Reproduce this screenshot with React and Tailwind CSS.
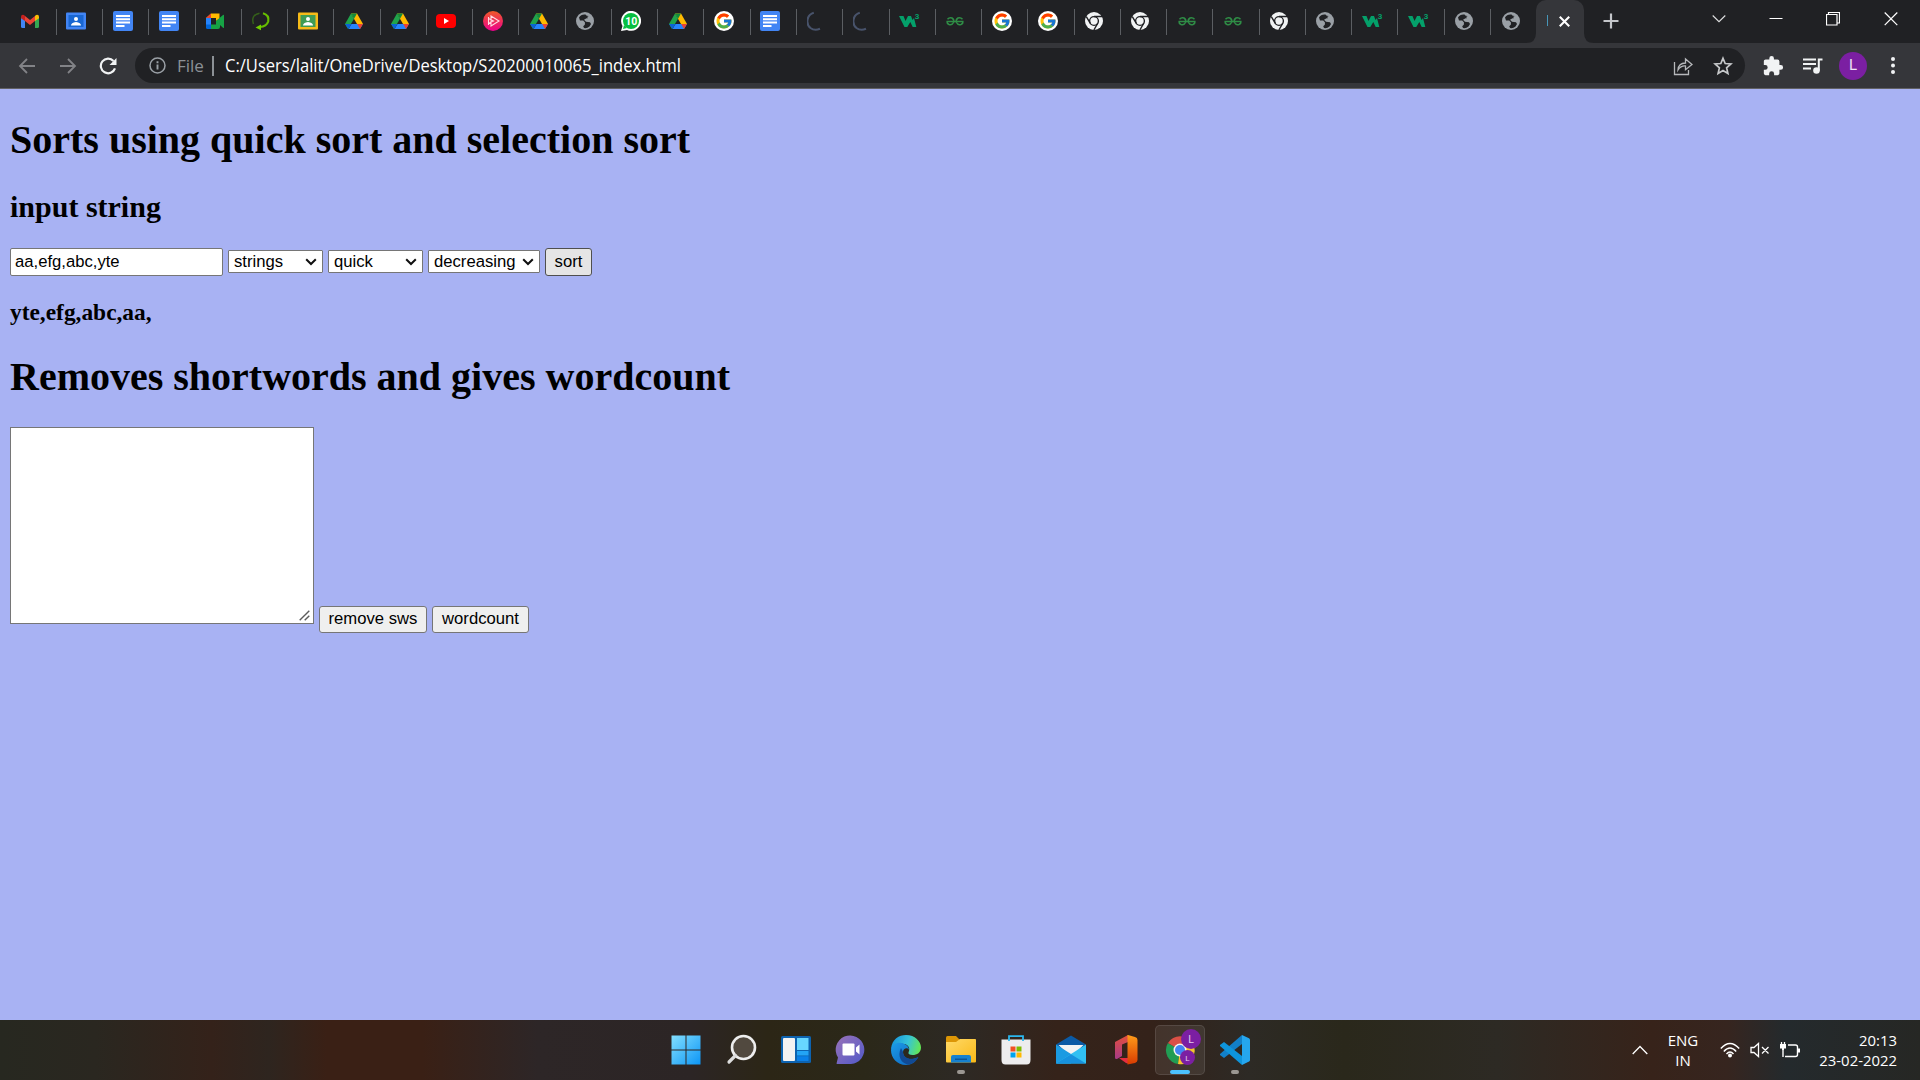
import React from "react";
import { FcGoogle } from "react-icons/fc";

const S = ({ vb = "0 0 20 20", className = "w-5 h-5", children }) => (
  <svg viewBox={vb} className={"shrink-0 " + className} fill="none">{children}</svg>
);

const Gmail = () => (
  <S><path d="M1 6v9.500q0 1.500 1.500 1.500H5V9z" fill="#4285f4" /><path d="M15 9v8h2.500q1.500 0 1.500-1.500V6z" fill="#34a853" /><path d="M5 5v5l5 4 5-4V5l-5 4z" fill="#ea4335" /><path d="M15 5l1-1q3-.8 3 2v1.200L15 10z" fill="#fbbc04" /><path d="M5 5L4 4Q1 3.200 1 6v1.200L5 10z" fill="#c5221f" /></S>
);
const Classroom = ({ bg, inner }) => (
  <S><rect x="0" y="1.500" width="20" height="17" rx="1" fill={bg} /><rect x="2.500" y="4" width="15" height="12" fill={inner} /><circle cx="10" cy="8" r="2" fill="#fff" /><path d="M5 14.500q0-3 5-3.500 5 .5 5 3.500z" fill="#fff" /></S>
);
const Docs = () => (
  <S><rect width="20" height="20" rx="2" fill="#4285f4" /><path d="M3 5h14M3 8.300h14M3 11.600h14M3 15h8.500" stroke="#fff" strokeWidth="2" /></S>
);
const Meet = () => (
  <S><path d="M1 7l5-4.500h8.500v5L11 10V7H6v1z" fill="#ffba00" /><path d="M1 7l5-4.500V7z" fill="#ea4335" /><path d="M1 7h5v7l-5 0z" fill="#2684fc" /><path d="M1 13.500h5V18H2.500Q1 18 1 16.500z" fill="#0066da" /><path d="M6 13.500h5V10l7-6q1-.5 1 .5v12q0 1-1 .3l-3-2.800V16q0 2-2 2H6z" fill="#16a345" /></S>
);
const Ring = () => (
  <S><path d="M12 2.200Q18.500 4 17.200 10.500 15.500 15.500 9 16" stroke="#66bd00" strokeWidth="2.200" /><path d="M10 13.500v5.800L4.500 16.500z" fill="#72cf00" /><path d="M2.500 13Q-.5 4 8.500 2.200" stroke="#35601a" strokeWidth="1.500" /></S>
);
const Drive = () => (
  <S><path d="M7 2.500h6l6 10.500h-6z" fill="#ffba00" /><path d="M7 2.500l3 5.200L4 18 1 13z" fill="#20a34b" /><path d="M7 2.500h6l-3 5.200z" fill="#118b3b" /><path d="M4.500 18l3-5H19l-3 5z" fill="#2684fc" /><path d="M1 13h6.500l-3.200 5z" fill="#0b63d6" /><path d="M13.200 13H19l-3 5z" fill="#ea4335" /></S>
);
const Youtube = () => (
  <S><rect x="0" y="3" width="20" height="14" rx="4" fill="#f00" /><path d="M8 7v6l5-3z" fill="#fff" /></S>
);
const Pluralsight = () => (
  <S><defs><linearGradient id="ps" x1="0" y1="0" x2="0" y2="1"><stop stopColor="#f05a28" /><stop offset="1" stopColor="#ec008c" /></linearGradient></defs><circle cx="10" cy="10" r="10" fill="url(#ps)" /><path d="M5.500 6v8M5.500 7.500l5 2.500-5 2.500M8 5l8 5-8 5z" stroke="#ffdce4" strokeWidth="1.100" /></S>
);
const Globe = () => (
  <S><circle cx="10" cy="10" r="9" fill="#9aa0a6" /><path d="M10.500 3.500q-4.500-.5-6.500 3l1 3h3.200l1.800 2-.2 2.200-1.600 1.500.8 1.800q3 .6 5.500-1.500l1.500-2.500-1-1.800-4-.4-2-2 2.500-1.600 1.600.2.800-2.400-2.200-.3z" fill="#202124" /><path d="M12.500 5.500l2.500-.8 1.800 3.300-1.800 1-2.500-1z" fill="#9aa0a6" /></S>
);
const Whatsapp = () => (
  <S><path d="M0 20l1.500-5A10 10 0 1 1 6 19z" fill="#fff" /><circle cx="10" cy="10" r="8" fill="#06bf40" /><path d="M2 18l1-4 3 3z" fill="#06bf40" /><text x="10.200" y="13.800" textAnchor="middle" fontSize="10.500" fontWeight="700" fontFamily="Roboto, sans-serif" fill="#fff">10</text></S>
);
const Google = () => (
  <span className="flex h-5 w-5 shrink-0 items-center justify-center rounded-full bg-white"><FcGoogle size={18} /></span>
);
const Arc = () => (
  <S><path d="M7.800 1.800A8.800 8.800 0 0 0 4.500 17Q8.500 20 14 17.800" stroke="#48536b" strokeWidth="2.100" transform="translate(-1 0)" /></S>
);
const W3 = () => (
  <S className="h-5 w-5 overflow-visible"><path d="M0 5h4.500l2 5L9 5h3l1.500 4L15 7l2.300 9h-3.600l-2.400-5-3 5H5.500z" fill="#04a06a" /><text x="15.800" y="8.300" fontSize="8" fontWeight="700" fontFamily="Roboto, sans-serif" fill="#04a06a">3</text></S>
);
const Gfg = () => (
  <S><path d="M1.500 10.500h17M2.500 8.300Q4.500 6 7 7q2.500 1.500 1.500 4.500Q7 14.500 4 13.500 1.800 12.500 2 10.500M17.500 8.300Q15.500 6 13 7q-2.500 1.500-1.500 4.500 1.500 3 4.500 2 2.200-1 2-3" stroke="#2f8d46" strokeWidth="1.500" /></S>
);
const Chrome = () => (
  <S><circle cx="10" cy="10" r="9" fill="#f1f3f4" /><circle cx="10" cy="10" r="4.400" fill="#f1f3f4" stroke="#202124" strokeWidth="1.400" /><path d="M10 5.500h8.300M6.200 12.200L2.300 5.600M13.800 12.200L9.900 19" stroke="#202124" strokeWidth="1.400" /></S>
);
const People = () => <Classroom bg="#4285f4" inner="#1967d2" />;
const Class = () => <Classroom bg="#f6bb18" inner="#3f9c55" />;

const tabs = [Gmail, People, Docs, Docs, Meet, Ring, Class, Drive, Drive, Youtube, Pluralsight, Drive, Globe, Whatsapp, Drive, Google, Docs, Arc, Arc, W3, Gfg, Google, Google, Chrome, Chrome, Gfg, Gfg, Chrome, Globe, W3, W3, Globe, Globe];

function TabStrip() {
  return (
    <div className="flex h-[43px] bg-[#202124] pl-[10.5px]">
      <div className="flex items-start">
        {tabs.map((Icon, i) => (
          <div key={i} className="flex h-[43px] w-[46.27px] items-start pt-[9px]">
            <div className={i < tabs.length - 1 ? "flex h-[26px] w-full items-start border-r border-[#5b5e62] pl-[9.5px] pt-[2px]" : "flex h-[26px] w-full items-start pl-[9.5px] pt-[2px]"}>
              <Icon />
            </div>
          </div>
        ))}
      </div>
      <div className="relative -ml-[1.4px] flex h-[43px] w-12 items-center rounded-t-[10px] bg-[#35363a] pl-[11px]">
        <svg className="absolute bottom-0 -left-[10px] h-[10px] w-[10px]" viewBox="0 0 10 10"><path d="M10 0v10H0Q10 10 10 0z" fill="#35363a" /></svg>
        <svg className="absolute bottom-0 -right-[10px] h-[10px] w-[10px]" viewBox="0 0 10 10"><path d="M0 0v10h10Q0 10 0 0z" fill="#35363a" /></svg>
        <div className="-mt-0.5 h-[11px] w-[1.5px] bg-[#4796b8]" />
        <S vb="0 0 10 10" className="ml-[10.5px] -mt-px h-[11px] w-[11px]"><path d="M.7.7l8.600 8.600M9.300.7L.7 9.300" stroke="#fff" strokeWidth="1.900" /></S>
      </div>
      <S vb="0 0 16 16" className="ml-[19px] mt-[13px] h-4 w-4"><path d="M8 .5v15M.5 8h15" stroke="#c4c6ca" strokeWidth="2.200" /></S>
      <div className="ml-auto flex items-start pr-[22px] pt-[12px]">
        <S vb="0 0 14 14" className="mr-[43px] h-[14px] w-[14px]"><path d="M.7 3.500L7 9.700l6.300-6.200" stroke="#dfe0e1" strokeWidth="1.100" /></S>
        <S vb="0 0 14 14" className="mr-[43px] h-[14px] w-[14px]"><path d="M.5 6.500h13" stroke="#fff" /></S>
        <S vb="0 0 14 14" className="mr-[44px] h-[14px] w-[14px]"><path d="M.5 2.500h10.500v10.500H.5zM2.500 2.500v-2h11v10.500h-2.500" stroke="#fff" strokeWidth="1.200" /></S>
        <S vb="0 0 14 14" className="h-[14px] w-[14px]"><path d="M.7.500l12.600 12.600M13.300.500L.7 13.100" stroke="#fff" strokeWidth="1.200" /></S>
      </div>
    </div>
  );
}

function Toolbar() {
  return (
    <div className="flex h-[46px] items-start border-b border-[#616165] bg-[#35363a] pl-[18px] pt-[5px]">
      <div className="flex h-[35px] items-center">
        <S vb="0 0 18 18" className="h-[18px] w-[18px]"><path d="M17 9H2.500M9 2L2 9l7 7" stroke="#828387" strokeWidth="1.800" /></S>
        <S vb="0 0 18 18" className="ml-[23px] h-[18px] w-[18px]"><path d="M1 9h14.500M9 2l7 7-7 7" stroke="#828387" strokeWidth="1.800" /></S>
        <S vb="0 0 18 18" className="ml-[22px] h-[18px] w-[18px]"><path d="M14.500 4A7.300 7.300 0 1 0 16 11.400" stroke="#f1f3f4" strokeWidth="2.200" /><path d="M17.500 1v7h-7z" fill="#f1f3f4" /></S>
      </div>
      <div className="ml-[18px] flex h-[35px] w-[1610px] items-center rounded-full bg-[#202124] pl-[14px] pr-[12px]">
        <S vb="0 0 17 17" className="h-[17px] w-[17px]"><circle cx="8.500" cy="8.500" r="7.500" stroke="#9aa0a6" strokeWidth="1.500" /><path d="M8.500 7.500v5M8.500 4.300v1.900" stroke="#9aa0a6" strokeWidth="1.900" /></S>
        <span className="ml-[11px] w-[35px] whitespace-nowrap font-['Open_Sans',sans-serif] text-[17px] text-[#8c9196]">File</span>
        <div className="h-5 w-[1.500px] bg-[#8c9196]" />
        <svg className="ml-[11px] h-[30px] w-[475px] shrink-0 overflow-visible"><text x="0" y="21" textLength="456" lengthAdjust="spacingAndGlyphs" className="fill-white font-['Open_Sans',sans-serif] text-[17.500px]">C:/Users/lalit/OneDrive/Desktop/S20200010065_index.html</text></svg>
        <S vb="0 0 20 20" className="ml-auto h-5 w-5"><path d="M1.500 6v12.500h14V14M5 14q.5-7 7.500-7V3L19 8.500l-6.500 5.200V10Q8 9.500 5 14z" stroke="#b6b8bb" strokeWidth="1.300" /></S>
        <S vb="0 0 20 20" className="ml-[20px] h-5 w-5"><path d="M10 2.300l2.200 5.200 5.700.5-4.300 3.800 1.300 5.600L10 14.500l-4.900 2.900 1.300-5.600L2.100 8l5.700-.5z" stroke="#c6c8ca" strokeWidth="1.700" /></S>
      </div>
      <div className="flex h-[35px] items-center">
        <S vb="0 0 24 24" className="ml-[17px] h-[22px] w-[22px]"><path d="M20.500 11H19V7c0-1.100-.9-2-2-2h-4V3.500a2.500 2.500 0 0 0-5 0V5H4c-1.100 0-2 .9-2 2v3.800h1.500a2.700 2.700 0 0 1 0 5.400H2V20c0 1.100.9 2 2 2h3.800v-1.500a2.700 2.700 0 0 1 5.400 0V22H17c1.100 0 2-.9 2-2v-4h1.500a2.500 2.500 0 0 0 0-5z" fill="#f1f3f4" /></S>
        <S vb="0 0 20 18" className="ml-[19px] h-[18px] w-5"><path d="M0 2.500h13M0 7h13M0 11.500h8" stroke="#f1f3f4" strokeWidth="1.800" /><path d="M19.500 2.500h-3.700v11" stroke="#f1f3f4" strokeWidth="2" /><circle cx="13.500" cy="13.500" r="3.300" fill="#f1f3f4" /></S>
        <div className="ml-[16px] flex h-7 w-7 items-center justify-center rounded-full bg-[#7b1fa2] font-['Roboto',sans-serif] text-[15px] text-[#efe0f5]">L</div>
        <S vb="0 0 4 18" className="ml-[23.500px] h-[18px] w-1"><circle cx="2" cy="2" r="2" fill="#f1f3f4" /><circle cx="2" cy="8.500" r="2" fill="#f1f3f4" /><circle cx="2" cy="15" r="2" fill="#f1f3f4" /></S>
      </div>
    </div>
  );
}

function Select({ label, className }) {
  return (
    <div className={"flex h-[23px] shrink-0 items-center justify-between whitespace-nowrap rounded-[1px] border border-[#767676] bg-white pl-[5px] pr-[5px] " + className}>
      <span>{label}</span>
      <S vb="0 0 12 10" className="h-[10px] w-[12px]"><path d="M1.200 2.200L6 7l4.800-4.800" stroke="#101010" strokeWidth="2" /></S>
    </div>
  );
}

function PageContent() {
  return (
    <main className="h-[931px] bg-[#a8b2f3] px-[10px] pt-[28px] font-['Liberation_Serif',serif] text-black">
      <h1 className="text-[40px] font-bold leading-[46px]">Sorts using quick sort and selection sort</h1>
      <h2 className="mt-[27px] text-[30px] font-bold leading-[34px]">input string</h2>
      <div className="mt-[24px] flex h-[28px] items-start font-['Liberation_Sans',sans-serif] text-[16.670px] leading-[20px]">
        <input readOnly value="aa,efg,abc,yte" className="h-[28px] w-[213px] rounded-[2px] border border-[#767676] bg-white px-[4px] pb-[1px] outline-none" />
        <Select label="strings" className="ml-[5px] mt-[2px] w-[95px]" />
        <Select label="quick" className="ml-[5px] mt-[2px] w-[95px]" />
        <Select label="decreasing" className="ml-[5px] mt-[2px] w-[112px]" />
        <button className="ml-[5px] h-[28px] w-[47px] rounded-[3px] border border-[#4f4f4f] bg-[#e5e5e5] pb-[1px]">sort</button>
      </div>
      <h3 className="mt-[23px] text-[23.400px] font-bold leading-[27px]">yte,efg,abc,aa,</h3>
      <h1 className="mt-[28px] text-[40px] font-bold leading-[46px]">Removes shortwords and gives wordcount</h1>
      <div className="mt-[27px] flex h-[206px] items-end font-['Liberation_Sans',sans-serif] text-[16.670px] leading-[20px]">
        <div className="relative mb-[9px] h-[197px] w-[304px] border border-[#767676] bg-white">
          <svg className="absolute bottom-[2px] right-[3px] h-[11px] w-[11px]" viewBox="0 0 11 11"><path d="M.7 10.300L10.300.7M5.700 10.300l4.600-4.600" stroke="#5c5c5c" strokeWidth="1.400" /></svg>
        </div>
        <button className="ml-[5px] h-[27px] w-[108px] whitespace-nowrap rounded-[3px] border border-[#767676] bg-[#efefef] pb-[1px]">remove sws</button>
        <button className="ml-[5px] h-[27px] w-[97px] whitespace-nowrap rounded-[3px] border border-[#767676] bg-[#efefef] pb-[1px]">wordcount</button>
      </div>
    </main>
  );
}

const Grad = ({ id, a, b, x2 = 1, y2 = 1 }) => (
  <linearGradient id={id} x1="0" y1="0" x2={x2} y2={y2}><stop stopColor={a} /><stop offset="1" stopColor={b} /></linearGradient>
);
const T = ({ children }) => <svg viewBox="0 0 32 32" className="h-8 w-8" fill="none">{children}</svg>;

const Windows = () => <T><defs><linearGradient id="wi" gradientUnits="userSpaceOnUse" x1="1" y1="1" x2="31" y2="31"><stop stopColor="#85e0ff" /><stop offset="1" stopColor="#0a94f5" /></linearGradient></defs><path d="M1.500 1.500h14v14h-14zM16.500 1.500h14v14h-14zM1.500 16.500h14v14h-14zM16.500 16.500h14v14h-14z" fill="url(#wi)" /></T>;
const Search = () => <T><circle cx="18.500" cy="13.500" r="11.500" fill="#51493f" stroke="#eee" strokeWidth="2.600" /><path d="M10.500 21.500L4 28" stroke="#ddd" strokeWidth="3.200" strokeLinecap="round" /></T>;
const Widgets = () => <T><rect x="1" y="2" width="30" height="27" rx="1.500" fill="#0d63b0" /><rect x="3" y="4" width="12" height="23" rx="1" fill="#f2f2f2" /><path d="M17 4h11.500v12H17z" fill="#68d6ff" /><path d="M17 17h11.500v4.500H17z" fill="#23a4f5" /><path d="M17 22.200h11.500V27H17z" fill="#0a80e8" /></T>;
const Chat = () => <T><defs><Grad id="ch" a="#9a72b8" b="#5059c9" /></defs><path d="M1.500 29.500l1.500-6A14.300 14.300 0 1 1 16 30H2z" fill="url(#ch)" /><rect x="7.500" y="9.500" width="12" height="12" rx="1" fill="#fff" /><path d="M21 13.500l3.500-3v10l-3.500-3z" fill="#fff" /></T>;
const Edge = () => <T><defs><linearGradient id="e1" x1="0" y1=".3" x2="1" y2=".5"><stop stopColor="#1593dd" /><stop offset=".55" stopColor="#36c3d8" /><stop offset="1" stopColor="#62e657" /></linearGradient><Grad id="e2" a="#1c9ce8" b="#0c62bd" /></defs><path d="M1 15C2 5 9 1 16 1c9 0 15 6.500 15 12.500 0 5-4 7.500-8.500 7.500-3 0-4.500-1.300-4-2.500 3-6-3-9.500-8-8.500-5 1-8 5-9.500 5z" fill="url(#e1)" /><path d="M1 16c1-6 6-8 10-7 5 .5 8 4 8 7-1-3-6-2-6 2 0 7 8 9 15 5-2 5-7 8-12 8C7 31 1 24 1 16z" fill="url(#e2)" /><path d="M11 14c-4 8 0 16 8 16.500 4-.5 8-4 9.500-7.500C21 27 13 24 13 18z" fill="#114a94" /></T>;
const Explorer = () => <T><defs><Grad id="ex" a="#ffd968" b="#f9b917" /></defs><path d="M1 5V3.500Q1 2 2.500 2H11l4 4v6H1z" fill="#dc9606" /><path d="M1 8h10l4-3h15.500Q31 5 31 6.500v21q0 1-1 1H2q-1 0-1-1z" fill="url(#ex)" /><path d="M6 28.500V23q0-2 2-2h16q2 0 2 2v5.500z" fill="#1681cf" /><path d="M10 24.500h12v1.500H10z" fill="#0a5699" /></T>;
const Store = () => <T><path d="M1.500 5.500h29v20.500q0 4.500-4 4.500h-21q-4 0-4-4.500z" fill="#ededee" /><path d="M9 7V2.200h14V7" stroke="#2bb8ef" strokeWidth="1.800" /><path d="M10.500 12.500h5v5h-5z" fill="#f25022" /><path d="M16.500 12.500h5v5h-5z" fill="#7fba00" /><path d="M10.500 18.500h5v5h-5z" fill="#00a4ef" /><path d="M16.500 18.500h5v5h-5z" fill="#ffb900" /></T>;
const Mail = () => <T><path d="M1 10.500l15-9 15 9-15 13z" fill="#0b5aa5" /><path d="M3.500 11h25L16 23z" fill="#f3f3f3" /><path d="M1 10.500L16 20v9.500H1z" fill="#1b9be2" /><path d="M1 29.500L31 10.500v19z" fill="#31c0f2" /><path d="M16 20.300L31 29.500H1z" fill="#1791de" /></T>;
const Office = () => <T><defs><Grad id="of" a="#e34f3c" b="#a73a87" x2={0} /><Grad id="og" a="#ff9c1a" b="#d83b01" x2={0} /></defs><path d="M5 8l13-7v7l-6 2.500V22l-5 3q-2 .5-2-1.500z" fill="url(#of)" /><path d="M9 24h9v5.500L16 29z" fill="#e52d3f" /><path d="M18 1l7 2q2.500.7 2.500 3v20q0 2-2.500 3l-7.500 1.500V1z" fill="url(#og)" /></T>;
const TaskChrome = () => (
  <svg viewBox="0 0 38 38" className="-mt-[7px] ml-[8px] h-[38px] w-[38px] shrink-0" fill="none"><path d="M15 22L2.900 15A14 14 0 0 0 13 36z" fill="#219d54" /><path d="M15 22L3 15A14 14 0 0 1 27 15z" fill="#da5046" /><path d="M15 22l12.500-7A14 14 0 0 1 13 36z" fill="#f4c52e" /><circle cx="15" cy="22" r="6.500" fill="#f7f4ee" /><circle cx="15" cy="22" r="5" fill="#4285f4" /><circle cx="26" cy="11" r="10" fill="#7b1fa2" /><circle cx="22.500" cy="29.500" r="7.500" fill="#7b1fa2" /><text x="26" y="14.800" textAnchor="middle" fontSize="10.500" fontFamily="Roboto, sans-serif" fill="#e4cbed">L</text><text x="22.500" y="32.500" textAnchor="middle" fontSize="8" fontFamily="Roboto, sans-serif" fill="#e4cbed">L</text></svg>
);
const Code = () => <T><path d="M23 1l7 3.300q1 .5 1 1.700v20q0 1-1 1.600L23 31z" fill="#25a6ee" /><path d="M23 1v9L5 24l-4-3v-1z" fill="#1280c9" /><path d="M23 31v-9L5 8 1 11v1z" fill="#0e95dc" /></T>;

const apps = [[Windows], [Search], [Widgets], [Chat], [Edge], [Explorer, "open"], [Store], [Mail], [Office], [TaskChrome, "active"], [Code, "open"]];

function Taskbar() {
  return (
    <footer className="flex h-[60px] items-start bg-[linear-gradient(90deg,#272820_0%,#2a2720_5%,#34221a_11%,#2e251f_14%,#3a2015_17%,#3a2015_22%,#2d2627_28%,#2c2525_36%,#2c2616_40%,#2b2819_45%,#2d2924_50%,#35231a_55%,#34221a_60%,#2d2a25_65%,#2a281b_70%,#2d2a24_78%,#37231a_86%,#36251f_90%,#242a2d_93%,#262724_100%)] font-['Open_Sans',sans-serif] text-white">
      <div className="ml-[661px] flex gap-[5px] pt-[5px]">
        {apps.map(([Icon, state], i) => (
          <div key={i} className={state === "active" ? "relative -ml-px flex h-[50px] w-[50px] items-center justify-center rounded-[5px] border border-white/10 bg-white/8" : "relative flex h-[50px] w-[50px] items-center justify-center"}>
            <Icon />
            {state === "active" && <span className="absolute bottom-0 h-1 w-5 rounded-full bg-[#4cc2ff]" />}
            {state === "open" && <span className="absolute bottom-[1px] h-1 w-2 rounded-full bg-[#9b9792]" />}
          </div>
        ))}
      </div>
      <div className="ml-auto flex h-[60px] items-center pr-[23px]">
        <S vb="0 0 16 10" className="h-[10px] w-4"><path d="M.7 9L8 1.500 15.300 9" stroke="#fff" strokeWidth="1.300" /></S>
        <div className="ml-[17px] w-[36px] text-center text-[15px] leading-[20px]"><div className="whitespace-nowrap">ENG</div><div>IN</div></div>
        <S vb="0 0 20 16" className="ml-[19px] h-4 w-5"><path d="M.8 6.500Q10-3.500 19.200 6.500M3.800 9.500Q10 2.500 16.200 9.500M6.500 12q3.500-4 7 0" stroke="#fff" strokeWidth="1.400" /><circle cx="10" cy="13.500" r="2" fill="#fff" /></S>
        <S vb="0 0 20 16" className="ml-[10px] h-4 w-5"><path d="M1 5.500h3L8.500 1.500v13L4 10.500H1zM12 5l6.500 6.500M18.500 5L12 11.500" stroke="#fff" strokeWidth="1.300" /></S>
        <S vb="0 0 20 16" className="ml-[10px] h-4 w-5"><path d="M1.500 0v2.500M4.500 0v2.500" stroke="#fff" strokeWidth="1.300" /><path d="M0 2h6v4.500H4V8H2V6.500H0z" fill="#fff" /><path d="M3 7v8M8 3h7.500q2 0 2 2v7.500q0 2-2 2H5" stroke="#fff" strokeWidth="1.400" /><path d="M18 6.500h2v4h-2z" fill="#fff" /></S>
        <div className="ml-[17px] w-[80px] text-right text-[14.900px] leading-[20px]"><div>20:13</div><div className="whitespace-nowrap">23-02-2022</div></div>
      </div>
    </footer>
  );
}

export default function App() {
  return (
    <div className="flex h-[1080px] w-[1920px] flex-col overflow-hidden">
      <TabStrip />
      <Toolbar />
      <PageContent />
      <Taskbar />
    </div>
  );
}
